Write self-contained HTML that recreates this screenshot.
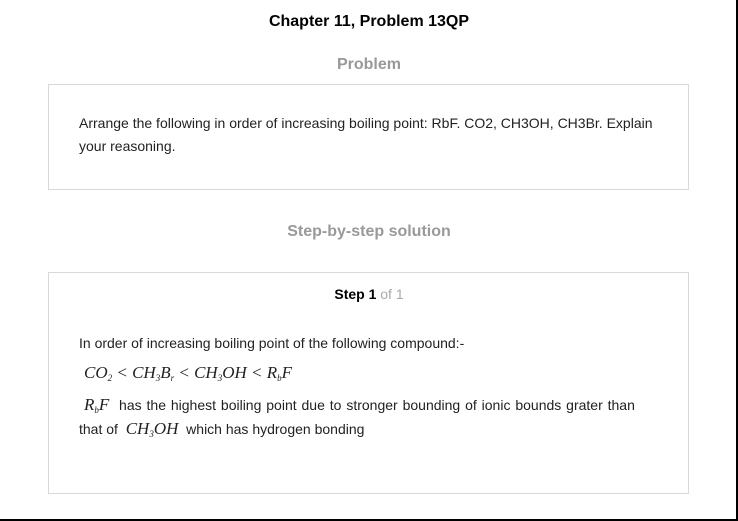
<!DOCTYPE html>
<html><head><style>
body{margin:0;width:738px;height:521px;background:#fff;font-family:"Liberation Sans",Arial,sans-serif;position:relative;overflow:hidden;color:#222}
.a{position:absolute}
.box{position:absolute;left:48px;width:641px;border:1px solid #d9d9d9;box-sizing:border-box}
.t{font-size:14px;white-space:nowrap}
.m{font-family:"Liberation Serif",serif;font-style:italic;font-size:17px;white-space:nowrap}
sub{font-size:9px;vertical-align:-3px}
</style></head><body>
<div class="a" style="left:0;right:0;top:13px;text-align:center;font-weight:bold;font-size:16px;color:#000">Chapter 11, Problem 13QP</div>
<div class="a" style="left:0;right:0;top:56px;text-align:center;font-weight:bold;font-size:16px;color:#999">Problem</div>
<div class="box" style="top:84px;height:106px"></div>
<div class="a t" style="left:79px;top:115px">Arrange the following in order of increasing boiling point: RbF. CO2, CH3OH, CH3Br. Explain</div>
<div class="a t" style="left:79px;top:138px">your reasoning.</div>
<div class="a" style="left:0;right:0;top:223px;text-align:center;font-weight:bold;font-size:16px;color:#999">Step-by-step solution</div>
<div class="box" style="top:272px;height:222px"></div>
<div class="a t" style="left:0;right:0;top:286px;text-align:center"><b style="color:#000">Step 1</b> <span style="color:#aaa">of 1</span></div>
<div class="a t" style="left:79px;top:335px">In order of increasing boiling point of the following compound:-</div>
<div class="a m" style="left:84px;top:363px">CO<sub>2</sub> &lt; CH<sub>3</sub>B<sub>r</sub> &lt; CH<sub>3</sub>OH &lt; R<sub>b</sub>F</div>
<div class="a t" style="left:84px;top:395px;word-spacing:1px"><span class="m">R<sub>b</sub>F</span>&nbsp; has the highest boiling point due to stronger bounding of ionic bounds grater than</div>
<div class="a t" style="left:79px;top:419px">that of &nbsp;<span class="m">CH<sub>3</sub>OH</span>&nbsp; which has hydrogen bonding</div>
<div class="a" style="left:0;top:519px;width:738px;height:2px;background:#000"></div>
<div class="a" style="left:736px;top:0;width:2px;height:521px;background:#000"></div>
</body></html>
